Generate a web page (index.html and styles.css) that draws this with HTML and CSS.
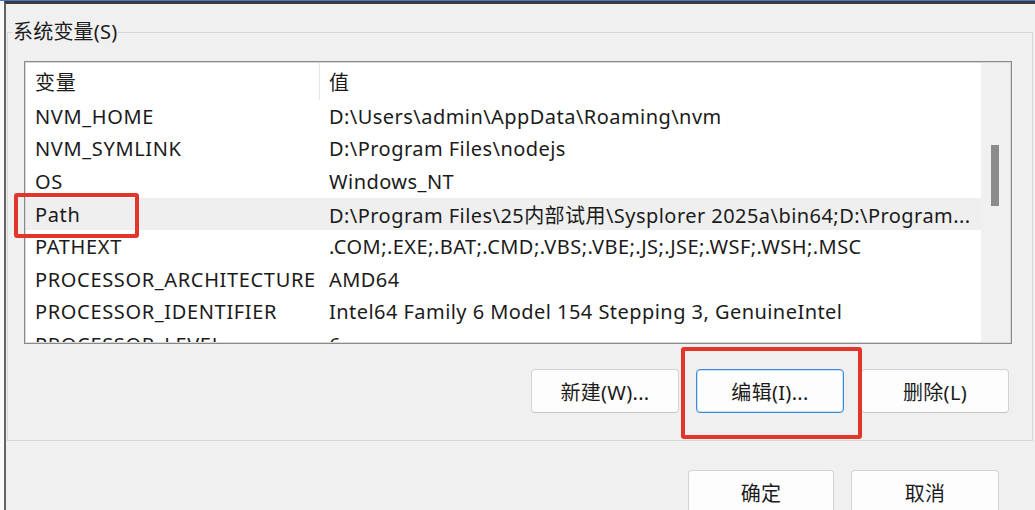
FILE: index.html
```html
<!DOCTYPE html>
<html lang="zh-CN">

<head>
    <meta charset="UTF-8">
    <title>环境变量</title>
    <link rel="stylesheet" href="styles.css">
</head>

<body>
    <div class="frame">
        <fieldset class="group">
            <legend>系统变量(S)</legend>
            <div class="listbox">
                <div class="list">
                    <div class="row head">
                        <div class="c-name">变量</div>
                        <div class="c-value">值</div>
                    </div>
                    <div class="row">
                        <div class="c-name">NVM_HOME</div>
                        <div class="c-value">D:\Users\admin\AppData\Roaming\nvm</div>
                    </div>
                    <div class="row">
                        <div class="c-name">NVM_SYMLINK</div>
                        <div class="c-value">D:\Program Files\nodejs</div>
                    </div>
                    <div class="row">
                        <div class="c-name">OS</div>
                        <div class="c-value">Windows_NT</div>
                    </div>
                    <div class="row selected">
                        <div class="c-name">Path</div>
                        <div class="c-value">D:\Program Files\25内部试用\Sysplorer 2025a\bin64;D:\Program...</div>
                    </div>
                    <div class="row">
                        <div class="c-name">PATHEXT</div>
                        <div class="c-value">.COM;.EXE;.BAT;.CMD;.VBS;.VBE;.JS;.JSE;.WSF;.WSH;.MSC</div>
                    </div>
                    <div class="row">
                        <div class="c-name">PROCESSOR_ARCHITECTURE</div>
                        <div class="c-value">AMD64</div>
                    </div>
                    <div class="row">
                        <div class="c-name">PROCESSOR_IDENTIFIER</div>
                        <div class="c-value">Intel64 Family 6 Model 154 Stepping 3, GenuineIntel</div>
                    </div>
                    <div class="row">
                        <div class="c-name">PROCESSOR_LEVEL</div>
                        <div class="c-value">6</div>
                    </div>
                </div>
                <div class="scrollbar">
                    <div class="thumb"></div>
                </div>
                <!-- red box around the Path entry -->
                <span class="mark mark-path"></span>
            </div>
            <div class="actions">
                <button class="btn">新建(W)...</button>
                <span class="mark-wrap">
                    <button class="btn focused">编辑(I)...</button>
                    <span class="mark mark-edit"></span>
                </span>
                <button class="btn">删除(L)</button>
            </div>
        </fieldset>
        <div class="footer">
            <button class="btn">确定</button>
            <button class="btn wide">取消</button>
        </div>
    </div>
</body>

</html>
```

FILE: styles.css
```css
* {
    box-sizing: border-box;
}

html,
body {
    margin: 0;
    height: 100%;
}

body {
    background-color: #fafafa;
    border-top: 1px solid #4a78c8;
    font-family: "Noto Sans", "Noto Sans CJK SC", sans-serif;
    font-size: 20px;
    letter-spacing: 0.45px;
    color: #1b1b1b;
    overflow: hidden;
}

.frame {
    margin-left: 4px;
    height: 100%;
    background-color: #f0f0f0;
    border-left: 2px solid #646464;
    border-top: 3px solid #3a3a3a;
}

/* group box */
.group {
    margin: 17px 2px 0 1px;
    padding: 0 20px 27px 4px;
    border: 1px solid #d6d6d6;
}

.group legend {
    padding: 0 1px;
    line-height: 22px;
    letter-spacing: 0.2px;
}

.listbox {
    position: relative;
    display: flex;
    height: 283px;
    margin: 18px 0 0 12px;
    border: 1px solid #8a8a8a;
    box-shadow: inset 0 0 0 1px #d8d8d8;
}

.list {
    flex: 1;
    overflow: hidden;
    background-color: #fff;
    margin: 1px 0 1px 1px;
}

.row {
    display: flex;
    align-items: center;
    height: 32.6px;
    white-space: nowrap;
}

.row.head {
    height: 37px;
    align-items: stretch;
}

.row.head .c-name {
    display: flex;
    align-items: center;
    border-right: 1px solid #e5e5e5;
}

.row.head .c-value {
    display: flex;
    align-items: center;
}

.row.selected {
    background-color: #efefef;
}

.c-name {
    width: 294px;
    flex: none;
    padding-left: 9px;
    letter-spacing: 0.65px;
    overflow: hidden;
}

.c-value {
    flex: 1;
    padding-left: 9px;
    overflow: hidden;
}

.scrollbar {
    width: 29px;
    flex: none;
    background-color: #f0f0f0;
    margin: 1px 1px 1px 0;
}

.thumb {
    width: 8px;
    height: 61px;
    margin: 82px 0 0 10px;
    background-color: #8b8b8b;
}

/* buttons */
.actions {
    display: flex;
    justify-content: flex-end;
    gap: 17px;
    margin-top: 25px;
    padding-right: 3px;
}

.btn {
    width: 148px;
    height: 44px;
    font-family: inherit;
    font-size: 20px;
    letter-spacing: 0.3px;
    color: #1b1b1b;
    background-color: #fdfdfd;
    border: 1px solid #d3d3d3;
    border-bottom-color: #c4c4c4;
    border-radius: 4px;
    padding: 0;
}

.btn.focused {
    border: 1px solid #3d88dc;
    box-shadow: inset 0 0 0 1px rgba(61, 136, 220, 0.25);
}

.footer {
    display: flex;
    justify-content: flex-end;
    gap: 17px;
    margin-top: 29px;
    padding-right: 36px;
}

.footer .btn {
    width: 146px;
}

.footer .btn.wide {
    width: 148px;
}

/* red highlight boxes */
.mark-wrap {
    position: relative;
    display: flex;
}

.mark {
    position: absolute;
    border: 4px solid #e2362c;
    border-radius: 3px;
    pointer-events: none;
}

.mark-path {
    left: -11px;
    top: 131px;
    width: 125px;
    height: 45px;
}

.mark-edit {
    left: -15px;
    top: -22px;
    width: 181px;
    height: 92px;
}
```
